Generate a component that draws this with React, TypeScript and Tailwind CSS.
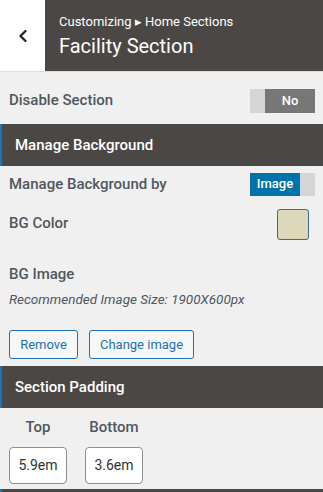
import { ChevronLeft } from "lucide-react";

const font = { fontFamily: "Roboto, 'Liberation Sans', sans-serif" };

function SectionHeader({ title }: { title: string }) {
  return (
    <div className="flex h-[42px] items-center border-l-2 border-[#2271b1] bg-[#4b4745] pl-[13px] text-[15px] font-medium text-white">
      {title}
    </div>
  );
}

export default function App() {
  return (
    <div className="h-[492px] w-[323px] overflow-hidden bg-[#f0f0f0] text-[#50575e]" style={font}>
      {/* header */}
      <div className="flex h-[72px] border-b border-[#dcdcde]">
        <button className="flex w-[45px] items-center justify-center bg-white text-[#1d2327]">
          <ChevronLeft size={20} strokeWidth={2.75} />
        </button>
        <div className="flex flex-1 flex-col justify-center bg-[#4b4745] pl-[14px] text-white">
          <div className="text-[13px] leading-4">Customizing ▸ Home Sections</div>
          <div className="mt-[4px] text-[20px] leading-6">Facility Section</div>
        </div>
      </div>

      {/* disable */}
      <div className="flex h-[52px] items-center justify-between pl-[9px] pr-[8px] pt-[5px]">
        <span className="text-[15px] font-medium">Disable Section</span>
        <div className="flex h-[24px] w-[65px]">
          <div className="w-[15px] bg-[#d5d5d5]" />
          <div className="flex flex-1 items-center justify-center bg-[#777] text-[13px] font-medium text-white">No</div>
        </div>
      </div>

      <SectionHeader title="Manage Background" />

      <div className="flex h-[36px] items-center justify-between pl-[9px] pr-[8px]">
        <span className="text-[15px] font-medium">Manage Background by</span>
        <div className="flex h-[23px] w-[65px]">
          <div className="flex w-[50px] items-center justify-center bg-[#0073aa] text-[13px] font-medium text-white">Image</div>
          <div className="flex-1 bg-[#d5d5d5]" />
        </div>
      </div>

      <div className="flex items-start justify-between pl-[9px] pr-[14px] pt-[4px]">
        <span className="mt-[1px] text-[15px] font-medium leading-[32px]">BG Color</span>
        <div className="mt-[3px] h-[31px] w-[32px] rounded-[3px] border border-[#3e6a8f] bg-[#dcd8b9]" />
      </div>

      <div className="pl-[9px] pt-[24px]">
        <div className="text-[15px] font-medium leading-5">BG Image</div>
        <div className="mt-[5px] text-[13.5px] italic leading-5">Recommended Image Size: 1900X600px</div>
        <div className="mt-[21px] flex gap-[11px]">
          <button className="h-[29px] w-[69px] rounded-[3px] border border-[#2271b1] bg-[#f6f7f7] text-[13px] text-[#2271b1]">
            Remove
          </button>
          <button className="h-[29px] w-[105px] rounded-[3px] border border-[#2271b1] bg-[#f6f7f7] text-[13px] text-[#2271b1]">
            Change image
          </button>
        </div>
      </div>

      <div className="mt-[7px]">
        <SectionHeader title="Section Padding" />
      </div>

      <div className="flex gap-[18px] pl-[9px] pt-[9px]">
        <div className="flex w-[58px] flex-col items-center">
          <span className="text-[15px] font-medium leading-5">Top</span>
          <div className="mt-[10px] flex h-[37px] w-[58px] items-center justify-center rounded-[4px] border border-[#8c8f94] bg-white text-[14px] text-[#2c3338]">
            5.9em
          </div>
        </div>
        <div className="flex w-[58px] flex-col items-center">
          <span className="text-[15px] font-medium leading-5">Bottom</span>
          <div className="mt-[10px] flex h-[37px] w-[58px] items-center justify-center rounded-[4px] border border-[#8c8f94] bg-white text-[14px] text-[#2c3338]">
            3.6em
          </div>
        </div>
      </div>

      <div className="mt-[5px] h-[10px] border-l-2 border-[#2271b1] bg-[#4b4745]" />
    </div>
  );
}
